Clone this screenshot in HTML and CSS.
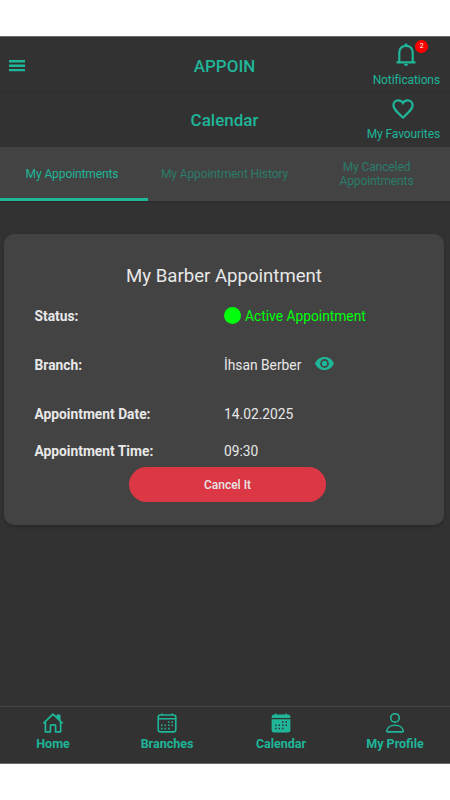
FILE: index.html
```html
<!DOCTYPE html>
<html lang="en">
<head>
<meta charset="utf-8">
<title>Appoin</title>
<link rel="stylesheet" href="styles.css">
</head>
<body>
<div class="app">
  <header class="bar">
    <button class="menu" aria-label="Menu">
      <svg width="16" height="12" viewBox="0 0 16 12"><path d="M0 1.300h16M0 5.700h16M0 10.100h16" stroke="currentColor" stroke-width="2.400"/></svg>
    </button>
    <h1 class="bar-title brand">APPOIN</h1>
    <a class="action">
      <span class="bell">
        <svg width="20" height="24" viewBox="0 0 20 24" fill="none" stroke="currentColor" stroke-width="2.200"><path d="M.5 19.300h19M3.300 19V9.500C3.300 5.400 6 2.800 10 2.800s6.700 2.600 6.700 6.700V19"/><path d="M8.600 1.500h2.800" stroke-width="1.800"/><path d="M8 21h4c0 1.300-.8 2-2 2s-2-.7-2-2z" fill="currentColor" stroke="none"/></svg>
        <span class="badge">2</span>
      </span>
      <span class="action-label">Notifications</span>
    </a>
  </header>
  <div class="bar sub">
    <span></span>
    <h2 class="bar-title">Calendar</h2>
    <a class="action">
      <svg class="heart" width="22" height="20" viewBox="0 0 22 20"><path d="M11 18.600 9.500 17.200C4.400 12.600 1.400 9.900 1.400 6.300 1.400 3.500 3.500 1.400 6.300 1.400c1.900 0 3.700.9 4.700 2.600 1-1.700 2.800-2.600 4.700-2.600 2.800 0 4.900 2.100 4.900 4.900 0 3.600-3 6.300-8.100 10.900z" fill="none" stroke="currentColor" stroke-width="2.200"/></svg>
      <span class="action-label">My Favourites</span>
    </a>
  </div>
  <nav class="tabs">
    <a class="tab active">My Appointments</a>
    <a class="tab">My Appointment History</a>
    <a class="tab last">My Canceled<br>Appointments</a>
  </nav>
  <main>
    <section class="card">
      <h3>My Barber Appointment</h3>
      <dl>
        <dt>Status:</dt><dd class="status"><i class="dot"></i>Active Appointment</dd>
        <dt>Branch:</dt><dd>İhsan Berber
          <svg class="eye" width="19" height="13" viewBox="0 0 19 13"><path fill="currentColor" fill-rule="evenodd" d="M9.500 0C5.200 0 1.500 2.700 0 6.500 1.500 10.300 5.200 13 9.500 13s8-2.700 9.500-6.500C17.500 2.700 13.800 0 9.500 0zm0 10.900a4.400 4.400 0 1 1 0-8.800 4.400 4.400 0 0 1 0 8.800zm0-1.700a2.700 2.700 0 1 0 0-5.400 2.700 2.700 0 0 0 0 5.400z"/></svg></dd>
        <dt>Appointment Date:</dt><dd>14.02.2025</dd>
        <dt>Appointment Time:</dt><dd>09:30</dd>
      </dl>
      <button class="cancel">Cancel It</button>
    </section>
  </main>
  <footer class="nav">
    <a class="nav-item">
      <svg width="20" height="20" viewBox="0 0 20 20" fill="none" stroke="currentColor" stroke-width="1.700" stroke-linejoin="round" stroke-linecap="round"><path d="M.9 9.800 10 1.200l9.100 8.600M2.400 8.800v10h5v-6.100c0-.5.3-.8.8-.8h3.600c.5 0 .8.3.8.8v6.100h5v-10"/><path d="M14 4.500V2h3v5.300z" fill="currentColor" stroke-width="1"/></svg>
      <span>Home</span>
    </a>
    <a class="nav-item">
      <svg width="20" height="20" viewBox="0 0 20 20" fill="none" stroke="currentColor"><rect x="1.200" y="2" width="17.600" height="16.900" rx="2.300" stroke-width="1.600"/><path d="M1.200 5.800h17.600M4.700.5V2M15.300.5V2" stroke-width="1.600"/><path d="M11 9h1.500m2 0H16M4 12.300h1.500m2 0H9m2 0h1.500m2 0H16M4 15.600h1.500m2 0H9m2 0h1.500" stroke-width="1.600"/></svg>
      <span>Branches</span>
    </a>
    <a class="nav-item">
      <svg width="20" height="20" viewBox="0 0 20 20"><path fill="currentColor" d="M.6 5V4A2.500 2.500 0 0 1 3.100 1.500H4V.4h1.500v1.100h9V.4H16v1.100h.9A2.500 2.500 0 0 1 19.400 4v1zM.6 6.300h18.800v10.600a2.500 2.500 0 0 1-2.500 2.500H3.100a2.500 2.500 0 0 1-2.500-2.500z"/><path class="holes" d="M11 9h1.500m2 0H16M4 12.300h1.500m2 0H9m2 0h1.500m2 0H16M4 15.600h1.500m2 0H9m2 0h1.500"/></svg>
      <span>Calendar</span>
    </a>
    <a class="nav-item">
      <svg width="20" height="20" viewBox="0 0 20 20" fill="none" stroke="currentColor" stroke-width="1.600"><circle cx="10" cy="4.900" r="4.200"/><path d="M1.700 18.100c.3-3.500 3.700-5.900 8.300-5.900s8 2.400 8.300 5.900c0 .5-.3.800-.8.800h-15c-.5 0-.8-.3-.8-.8z"/></svg>
      <span>My Profile</span>
    </a>
  </footer>
</div>
</body>
</html>
```
FILE: styles.css
```css
* { box-sizing: border-box; }
body {
  margin: 0;
  padding: 36px 0;
  height: 800px;
  background: #fff;
  font-family: Roboto, sans-serif;
  overflow: hidden;
}
h1, h2, h3, dl, dd { margin: 0; }
button { border: 0; background: none; padding: 0; font: inherit; color: inherit; }
svg { display: block; flex: none; }

.app {
  display: flex;
  flex-direction: column;
  height: 728px;
  background: #323232;
  color: #1fb598;
  border-top: 1px solid #6b6b6b;
  border-bottom: 1px solid #6b6b6b;
  overflow: hidden;
}
.bar {
  display: grid;
  grid-template-columns: 1fr auto 1fr;
  height: 56px;
  padding: 0 10px 0 9px;
  border-bottom: 1px solid #2e2e2e;
}
.bar.sub { height: 54px; border: 0; }
.menu { justify-self: start; padding-top: 23px; display: flex; }
.bar-title {
  font-size: 17px;
  font-weight: 500;
  line-height: 24px;
  padding-top: 15px;
}
.brand { padding-top: 17px; }
.action {
  justify-self: end;
  display: flex;
  flex-direction: column;
  align-items: center;
  padding-top: 6px;
}
.bell { position: relative; }
.badge {
  position: absolute;
  left: 19px;
  top: -3px;
  width: 13px;
  height: 13px;
  border-radius: 50%;
  background: #f00;
  color: #fff;
  font-size: 7px;
  line-height: 13px;
  text-align: center;
}
.action-label {
  font-size: 12px;
  line-height: 16px;
  margin-top: 5px;
  letter-spacing: -0.1px;
}
.heart { margin-bottom: 2px; }

.tabs {
  display: grid;
  grid-template-columns: 148px 153px 149px;
  height: 54px;
  flex: none;
  background: #434343;
  box-shadow: 0 1px 2px #292929;
}
.tab {
  display: flex;
  align-items: center;
  justify-content: center;
  text-align: center;
  font-size: 12px;
  line-height: 14px;
  letter-spacing: -0.1px;
  color: #2a7c6b;
}
.tab.active {
  color: #1fb598;
  padding: 3px 4px 0 0;
  border-bottom: 3px solid #1fb598;
}
.tab.last { padding-left: 2px; }

main { flex: 1; padding: 33px 6px 0 4px; }
.card {
  height: 291px;
  border-radius: 10px;
  background: #434343;
  box-shadow: 0 2px 3px #292929;
  color: #e8e8e8;
}
.card h3 {
  font-size: 18.600px;
  font-weight: 400;
  line-height: 24px;
  padding-top: 30px;
  text-align: center;
}
dl {
  display: grid;
  grid-template-columns: 189.500px 1fr;
  grid-template-rows: 49px 49px 49px 26px;
  padding: 3px 0 0 30.500px;
  height: 179px;
  font-size: 13.800px;
}
dt, dd { display: flex; align-items: center; }
dt { font-weight: 700; }
.status { color: #00ff0b; }
.dot { width: 17px; height: 17px; border-radius: 50%; background: #00ff0b; margin-right: 4px; }
.eye { color: #1fb598; margin: 0 0 2px 14px; }
.cancel {
  display: block;
  width: 197px;
  height: 35px;
  margin: 0 0 0 125px;
  border-radius: 18px;
  background: #dc3744;
  font-size: 12px;
  font-weight: 500;
}

.nav {
  display: grid;
  grid-template-columns: repeat(4, 114px);
  margin-left: -4px;
  height: 57px;
  border-top: 1px solid #424645;
  font-size: 12.500px;
  font-weight: 700;
  line-height: 16px;
}
.nav-item {
  display: flex;
  flex-direction: column;
  align-items: center;
  gap: 3px;
  padding-top: 6px;
}
.holes { fill: none; stroke: #323232; stroke-width: 1.500; }
```
